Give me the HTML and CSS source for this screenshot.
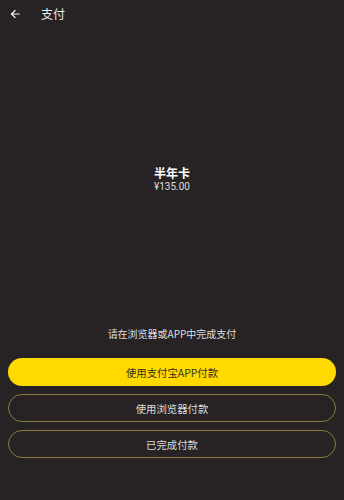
FILE: index.html
```html
<!DOCTYPE html>
<html lang="zh">
<head>
<meta charset="utf-8">
<title>支付</title>
<link rel="stylesheet" href="styles.css">
</head>
<body>
<div class="page">
  <header class="bar">
    <span class="back">
      <svg width="12" height="12" viewBox="0 0 24 24"><path d="M20 12H5M12 5l-7 7 7 7" fill="none" stroke="#fff" stroke-width="2.4" stroke-linecap="square"/></svg>
    </span>
    <span class="title">支付</span>
  </header>
  <main class="center">
    <div class="plan">半年卡</div>
    <div class="price">¥135.00</div>
  </main>
  <section class="actions">
    <p class="hint">请在浏览器或APP中完成支付</p>
    <button class="btn primary">使用支付宝APP付款</button>
    <button class="btn outline">使用浏览器付款</button>
    <button class="btn outline">已完成付款</button>
  </section>
</div>
</body>
</html>
```
FILE: styles.css
```css
* { box-sizing: border-box; }
html, body { margin: 0; padding: 0; }
body {
  background: #272324;
  font-family: "Noto Sans CJK SC", "Noto Sans", sans-serif;
  color: #e6e6e6;
}
.page {
  height: 500px;
  display: flex;
  flex-direction: column;
}
.bar {
  height: 28px;
  display: flex;
  align-items: center;
  padding-left: 9px;
}
.back {
  width: 12px;
  height: 12px;
  display: flex;
}
.title {
  margin-left: 20px;
  font-size: 12px;
  color: #f0f0f0;
  line-height: 16px;
}
.center {
  flex: 1;
  display: flex;
  flex-direction: column;
  align-items: center;
  justify-content: center;
  padding-top: 2px;
}
.plan {
  font-size: 12px;
  font-weight: 700;
  color: #fff;
  line-height: 15px;
}
.price {
  font-family: Roboto, "Noto Sans", sans-serif;
  font-size: 10px;
  color: #dcdcdc;
  line-height: 13px;
}
.actions {
  display: flex;
  flex-direction: column;
  gap: 8px;
  padding: 0 8px 42px 8px;
}
.hint {
  margin: 0 0 9px 0;
  text-align: center;
  font-size: 10px;
  line-height: 14px;
  color: #dedede;
}
.btn {
  height: 28px;
  border-radius: 14px;
  font-family: "Noto Sans CJK SC", "Noto Sans", sans-serif;
  font-size: 10.4px;
  padding: 0;
  cursor: pointer;
}
.primary {
  background: #ffd900;
  border: none;
  color: #37301c;
}
.outline {
  background: transparent;
  border: 1px solid #8a793c;
  color: #dcdcdc;
}
```
